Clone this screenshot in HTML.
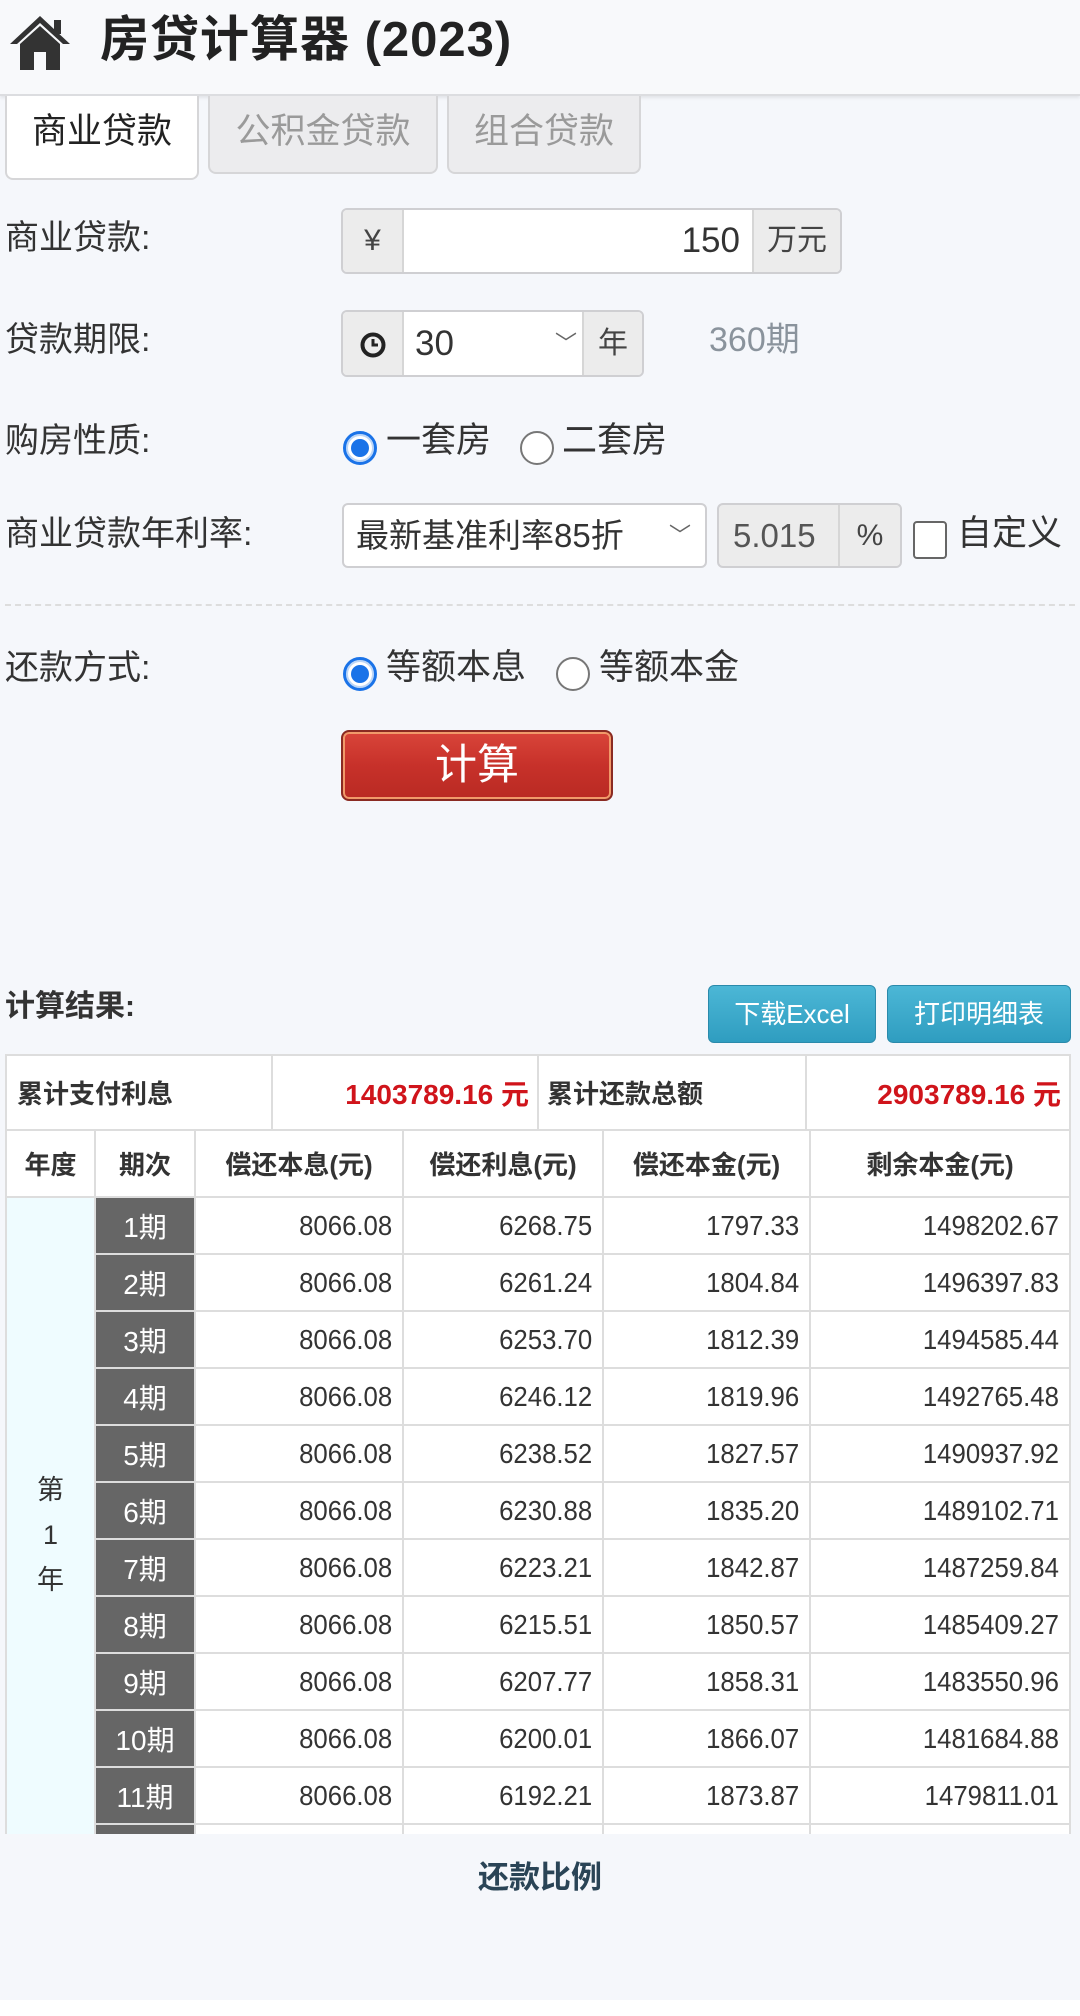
<!DOCTYPE html>
<html><head><meta charset="utf-8"><style>
*{margin:0;padding:0;box-sizing:border-box}
body{width:1080px;height:2016px;background:#f5f7fb;font-family:"Liberation Sans","Noto Sans CJK SC",sans-serif;color:#333;position:relative;overflow:hidden}
.a{position:absolute}
.hdr{left:0;top:0;width:1080px;height:96px;background:#f8f9fb;border-bottom:2px solid #dcdde0;box-shadow:0 2px 3px rgba(0,0,0,.08)}
.title{left:100px;top:10px;font-size:49px;font-weight:bold;color:#222;line-height:60px;letter-spacing:1px}
.tab{top:96px;height:78px;border:2px solid #d6d6d8;border-top:none;border-radius:0 0 8px 8px;background:#ececee;font-size:35px;color:#9a9a9a;text-align:center;line-height:72px}
.lab{left:5px;font-size:34px;color:#333;line-height:40px}
.box{border:2px solid #cfcfd2;border-radius:6px;background:#fff;overflow:hidden}
.add{position:absolute;top:0;bottom:0;background:#ececec;text-align:center;font-size:30px;color:#444}
.radio{width:34px;height:34px;border-radius:50%;border:2px solid #777;background:#fff}
.radio.on{border:3px solid #1a73e8;box-shadow:0 0 0 2px #bcd6f7 inset}
.radio.on::after{content:"";position:absolute;left:5px;top:5px;width:18px;height:18px;border-radius:50%;background:#1a73e8}
.opt{font-size:35px;color:#333;line-height:40px}
.btn{left:341px;top:730px;width:272px;height:71px;border-radius:8px;background:linear-gradient(#d9453a,#c7312a 50%,#b92a23);border:2px solid #8a2a22;box-shadow:inset 0 0 0 2px #f19a6a;color:#fff;font-size:42px;text-align:center;line-height:66px}
.bb{top:985px;height:58px;border-radius:6px;background:linear-gradient(#4cb7d6,#2f9dc0);border:1px solid #2a8aab;color:#fff;font-size:26px;text-align:center;line-height:56px}
table{border-collapse:collapse;position:absolute;background:#fff}
td{border:2px solid #ddd;font-size:26px}
.num td{font-family:"Liberation Sans Narrow","Liberation Sans",sans-serif;text-align:right;padding-right:10px;color:#333;font-size:28px;height:57px}
.num td span{display:inline-block;transform:scaleX(.92);transform-origin:right}
.num td.p{background:#666;color:#fff;text-align:center;padding:0;border-color:#ddd}
</style></head><body>
<div class="a hdr"></div>
<svg class="a" style="left:8px;top:12px" width="64" height="60" viewBox="0 0 64 60"><path d="M32 4 L2 32 L9 32 L32 11 L55 32 L62 32 Z" fill="#333"/><rect x="46" y="8" width="7" height="14" fill="#333"/><path d="M12 32 L32 14 L52 32 L52 58 L38 58 L38 40 L26 40 L26 58 L12 58 Z" fill="#333"/></svg>
<div class="a title">房贷计算器 (2023)</div>

<div class="a tab" style="left:5px;width:194px;height:84px;background:#fff;color:#222">商业贷款</div>
<div class="a tab" style="left:208px;width:230px">公积金贷款</div>
<div class="a tab" style="left:447px;width:194px">组合贷款</div>

<div class="a lab" style="top:218px">商业贷款:</div>
<div class="a box" style="left:341px;top:208px;width:501px;height:66px">
 <div class="add" style="left:0;width:61px;line-height:62px;border-right:2px solid #d6d6d6">¥</div>
 <div class="a" style="right:100px;top:0;font-size:35px;line-height:62px;color:#333">150</div>
 <div class="add" style="right:0;width:88px;line-height:62px;border-left:2px solid #d6d6d6">万元</div>
</div>

<div class="a lab" style="top:320px">贷款期限:</div>
<div class="a box" style="left:341px;top:310px;width:303px;height:67px">
 <div class="add" style="left:0;width:61px;border-right:2px solid #d6d6d6"><svg style="margin-top:20px" width="26" height="26" viewBox="0 0 26 26"><circle cx="13" cy="13" r="10.5" fill="none" stroke="#222" stroke-width="4"/><path d="M13 7 V13 H18" fill="none" stroke="#222" stroke-width="3"/></svg></div>
 <div class="a" style="left:72px;top:0;font-size:35px;line-height:63px">30</div>
 <div class="a" style="left:212px;top:0;font-size:22px;line-height:63px;color:#666">﹀</div>
 <div class="add" style="right:0;width:60px;line-height:63px;border-left:2px solid #d6d6d6">年</div>
</div>
<div class="a" style="left:709px;top:318px;font-size:34px;color:#8a939c;line-height:44px">360期</div>

<div class="a lab" style="top:421px">购房性质:</div>
<div class="a radio on" style="left:343px;top:431px"></div>
<div class="a opt" style="left:386px;top:421px">一套房</div>
<div class="a radio" style="left:520px;top:431px"></div>
<div class="a opt" style="left:562px;top:421px">二套房</div>

<div class="a lab" style="top:514px">商业贷款年利率:</div>
<div class="a box" style="left:342px;top:503px;width:365px;height:65px">
 <div class="a" style="left:12px;top:0;font-size:33px;line-height:61px">最新基准利率85折</div>
 <div class="a" style="right:14px;top:0;font-size:22px;line-height:61px;color:#666">﹀</div>
</div>
<div class="a box" style="left:717px;top:503px;width:185px;height:65px;background:#ececec">
 <div class="a" style="left:14px;top:0;font-size:33px;line-height:61px;color:#555">5.015</div>
 <div class="add" style="right:0;width:62px;line-height:61px;border-left:2px solid #d6d6d6">%</div>
</div>
<div class="a" style="left:913px;top:521px;width:34px;height:38px;border:2px solid #666;border-radius:4px;background:#fff"></div>
<div class="a opt" style="left:957px;top:514px">自定义</div>

<div class="a" style="left:5px;top:604px;width:1070px;border-top:2px dashed #ddd"></div>

<div class="a lab" style="top:648px">还款方式:</div>
<div class="a radio on" style="left:343px;top:657px"></div>
<div class="a opt" style="left:386px;top:648px">等额本息</div>
<div class="a radio" style="left:556px;top:657px"></div>
<div class="a opt" style="left:599px;top:648px">等额本金</div>

<div class="a btn">计算</div>

<div class="a" style="left:5px;top:987px;font-size:30px;font-weight:bold;color:#333;line-height:40px">计算结果:</div>
<div class="a bb" style="left:708px;width:168px">下载Excel</div>
<div class="a bb" style="left:887px;width:184px">打印明细表</div>

<table style="left:5px;top:1054px;width:1066px">
<tr style="height:75px">
<td style="width:266px;padding-left:10px;font-weight:bold">累计支付利息</td>
<td style="width:266px;text-align:right;padding-right:8px;color:#d0141b;font-weight:bold;font-size:28px">1403789.16 元</td>
<td style="width:268px;padding-left:8px;font-weight:bold">累计还款总额</td>
<td style="text-align:right;padding-right:8px;color:#d0141b;font-weight:bold;font-size:28px">2903789.16 元</td>
</tr></table>

<div class="a" style="left:5px;top:1129px;width:1066px;height:705px;overflow:hidden">
<table style="left:0;top:0;width:1066px">
<tr style="height:67px;font-weight:bold;text-align:center">
<td style="width:89px">年度</td><td style="width:100px">期次</td><td style="width:208px">偿还本息(元)</td><td style="width:200px">偿还利息(元)</td><td style="width:207px">偿还本金(元)</td><td>剩余本金(元)</td></tr>
<tbody class="num">
<tr><td rowspan="12" style="background:#effcff;text-align:center;padding:0;font-family:'Liberation Sans','Noto Sans CJK SC',sans-serif;font-size:27px;line-height:45px;vertical-align:top;padding-top:270px">第<br>1<br>年</td><td class="p">1期</td><td><span>8066.08</span></td><td><span>6268.75</span></td><td><span>1797.33</span></td><td><span>1498202.67</span></td></tr>
<tr><td class="p">2期</td><td><span>8066.08</span></td><td><span>6261.24</span></td><td><span>1804.84</span></td><td><span>1496397.83</span></td></tr>
<tr><td class="p">3期</td><td><span>8066.08</span></td><td><span>6253.70</span></td><td><span>1812.39</span></td><td><span>1494585.44</span></td></tr>
<tr><td class="p">4期</td><td><span>8066.08</span></td><td><span>6246.12</span></td><td><span>1819.96</span></td><td><span>1492765.48</span></td></tr>
<tr><td class="p">5期</td><td><span>8066.08</span></td><td><span>6238.52</span></td><td><span>1827.57</span></td><td><span>1490937.92</span></td></tr>
<tr><td class="p">6期</td><td><span>8066.08</span></td><td><span>6230.88</span></td><td><span>1835.20</span></td><td><span>1489102.71</span></td></tr>
<tr><td class="p">7期</td><td><span>8066.08</span></td><td><span>6223.21</span></td><td><span>1842.87</span></td><td><span>1487259.84</span></td></tr>
<tr><td class="p">8期</td><td><span>8066.08</span></td><td><span>6215.51</span></td><td><span>1850.57</span></td><td><span>1485409.27</span></td></tr>
<tr><td class="p">9期</td><td><span>8066.08</span></td><td><span>6207.77</span></td><td><span>1858.31</span></td><td><span>1483550.96</span></td></tr>
<tr><td class="p">10期</td><td><span>8066.08</span></td><td><span>6200.01</span></td><td><span>1866.07</span></td><td><span>1481684.88</span></td></tr>
<tr><td class="p">11期</td><td><span>8066.08</span></td><td><span>6192.21</span></td><td><span>1873.87</span></td><td><span>1479811.01</span></td></tr>
<tr><td class="p">12期</td><td><span>8066.08</span></td><td><span>6184.38</span></td><td><span>1881.70</span></td><td><span>1477929.31</span></td></tr>
</tbody></table></div>

<div class="a" style="left:0;top:1834px;width:1080px;height:166px;background:#f5f7fb"></div>
<div class="a" style="left:0;top:1856px;width:1080px;text-align:center;font-size:31px;font-weight:bold;color:#2a4456;line-height:44px">还款比例</div>
<div class="a" style="left:0;top:2000px;width:1080px;height:16px;background:#fff"></div>
</body></html>
